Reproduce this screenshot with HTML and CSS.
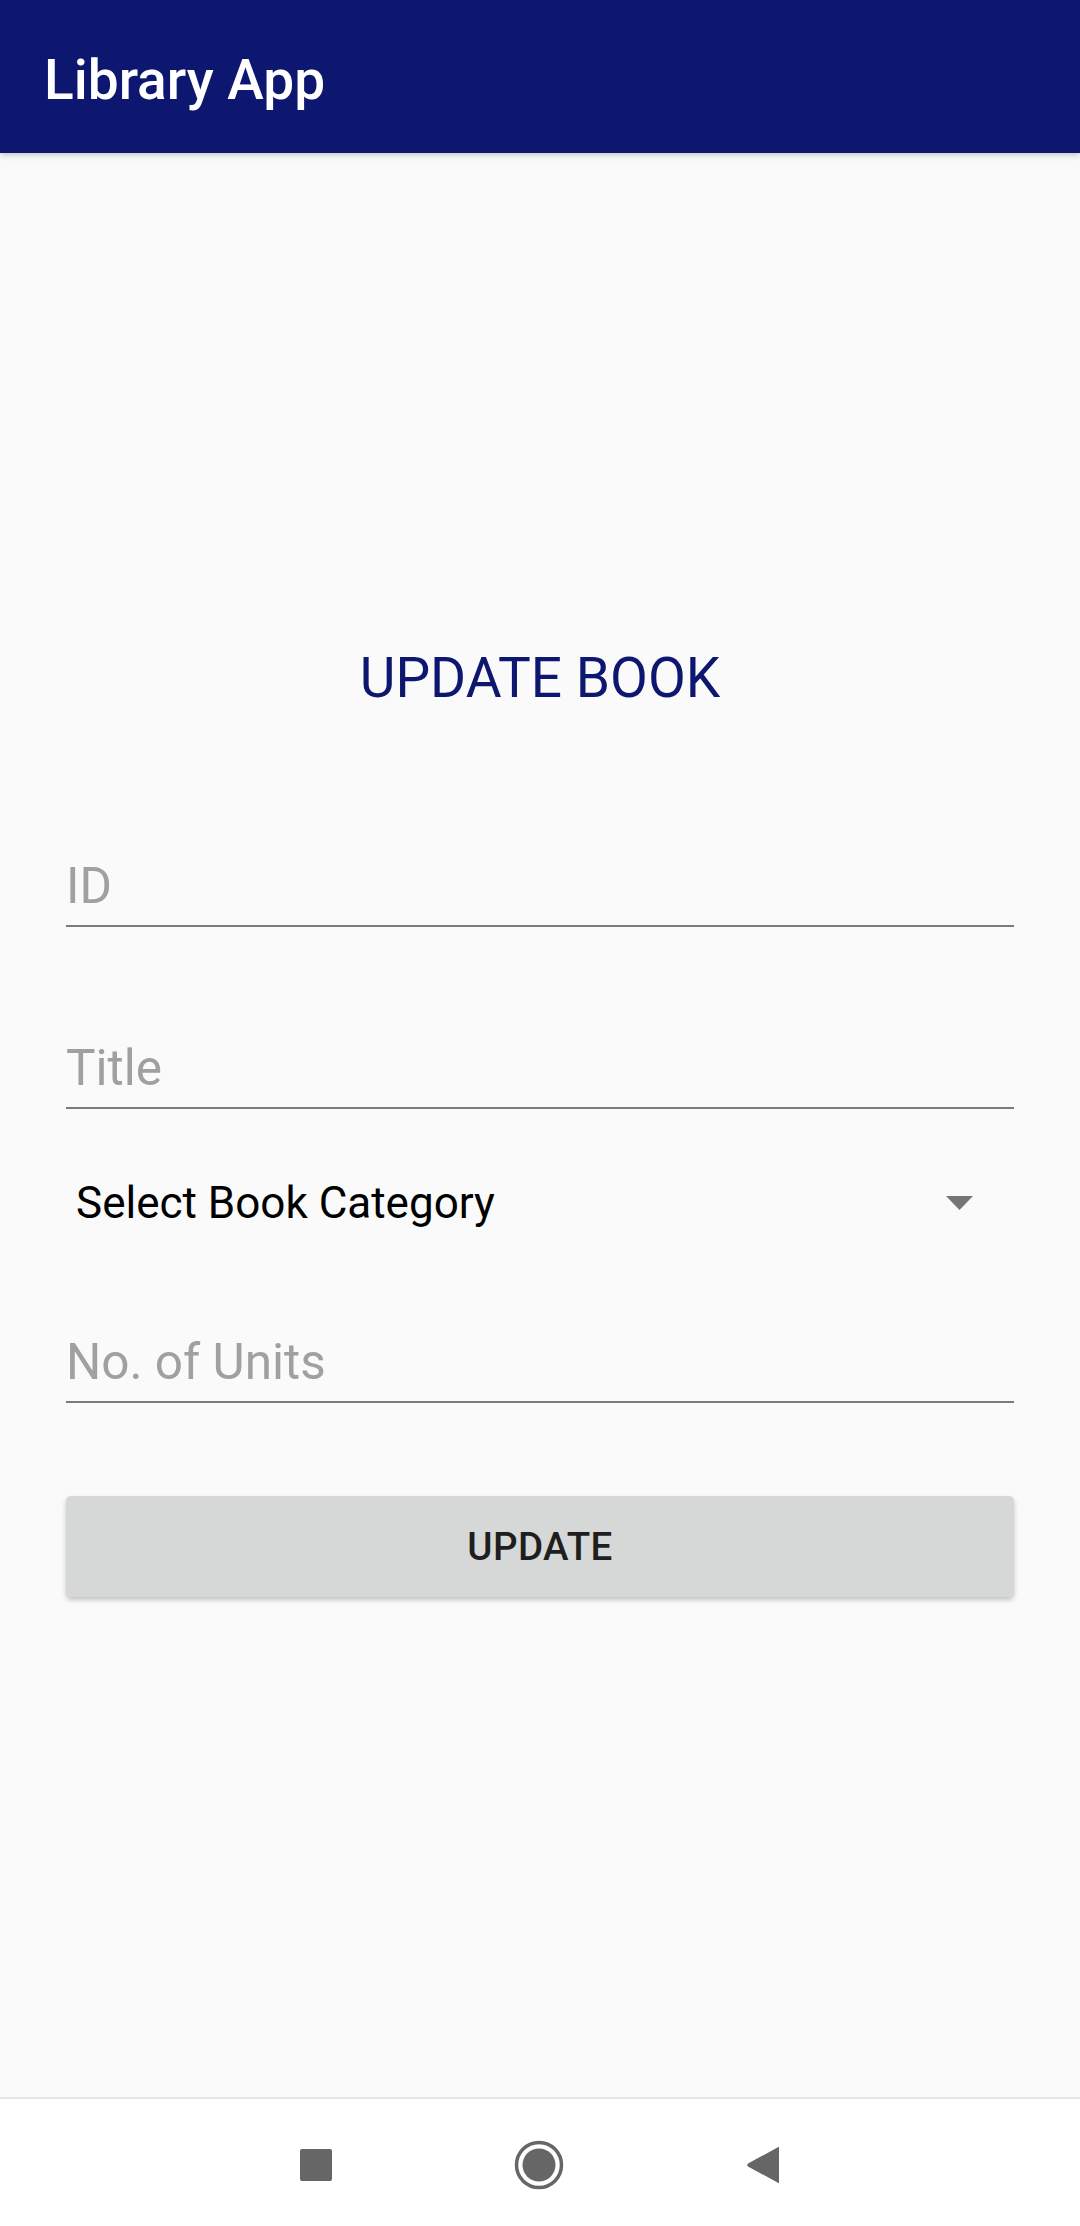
FILE: index.html
```html
<!DOCTYPE html>
<html>
<head>
<meta charset="utf-8">
<link rel="stylesheet" href="styles.css">
</head>
<body>
<div class="screen">
  <header class="appbar"><span class="appbar-title">Library App</span></header>
  <main class="content">
    <h1 class="page-title">UPDATE BOOK</h1>
    <div class="field field-id"><span class="hint">ID</span></div>
    <div class="field field-title"><span class="hint">Title</span></div>
    <div class="spinner">
      <span class="spinner-text">Select Book Category</span>
      <svg class="spinner-arrow" width="27" height="14" viewBox="0 0 27 14"><polygon points="0,0 27,0 13.5,14" fill="#757575"/></svg>
    </div>
    <div class="field field-units"><span class="hint">No. of Units</span></div>
    <button class="btn">UPDATE</button>
  </main>
  <nav class="navbar">
    <svg class="nav-icon" width="32" height="32" viewBox="0 0 32 32"><rect x="0" y="0" width="32" height="32" rx="2" fill="#666666"/></svg>
    <svg class="nav-icon" width="50" height="50" viewBox="0 0 50 50"><circle cx="25" cy="25" r="22.5" fill="none" stroke="#666666" stroke-width="3.5"/><circle cx="25" cy="25" r="16.5" fill="#666666"/></svg>
    <svg class="nav-icon" width="34" height="38" viewBox="0 0 34 38"><path d="M33 2 L33 36 Q33 38 31.5 36.5 L2 20.5 Q0.5 19 2 17.5 L31.5 1.5 Q33 0 33 2 Z" fill="#666666"/></svg>
  </nav>
</div>
</body>
</html>
```

FILE: styles.css
```css
html, body {
  margin: 0;
  padding: 0;
}

body {
  background: #fafafa;
  font-family: Roboto, "Noto Sans", "Liberation Sans", sans-serif;
}

.screen {
  width: 1080px;
  height: 2226px;
  display: flex;
  flex-direction: column;
  overflow: hidden;
}

.appbar {
  height: 153px;
  flex: 0 0 153px;
  box-sizing: border-box;
  background: #0e176f;
  display: flex;
  align-items: center;
  padding: 6px 0 0 44px;
  box-shadow: 0 2px 6px rgba(0, 0, 0, 0.22);
  position: relative;
  z-index: 1;
}

.appbar-title {
  color: #ffffff;
  font-size: 55px;
  font-weight: 500;
  line-height: 64px;
}

.content {
  flex: 1 1 auto;
  display: flex;
  flex-direction: column;
  padding: 0 66px;
}

.page-title {
  margin: 493px 0 0 0;
  font-size: 55px;
  font-weight: 400;
  line-height: 64px;
  color: #0e176f;
  text-align: center;
}

.field {
  height: 58px;
  padding-bottom: 10px;
  border-bottom: 2px solid #7b7b7b;
  box-sizing: content-box;
}

.hint {
  display: block;
  font-size: 49.5px;
  line-height: 58px;
  color: #a0a0a0;
}

.field-id {
  margin-top: 147px;
}

.field-title {
  margin-top: 112px;
}

.spinner {
  margin-top: 68px;
  height: 52px;
  display: flex;
  align-items: center;
  justify-content: space-between;
  padding: 0 41px 0 10px;
}

.spinner-text {
  font-size: 44px;
  line-height: 52px;
  color: #000000;
}

.spinner-arrow {
  display: block;
}

.field-units {
  margin-top: 104px;
}

.btn {
  margin-top: 93px;
  height: 101px;
  border: none;
  border-radius: 5px;
  background: #d6d7d7;
  box-shadow: 0 3px 5px rgba(0, 0, 0, 0.22);
  font-family: Roboto, "Noto Sans", "Liberation Sans", sans-serif;
  font-size: 38.5px;
  font-weight: 500;
  letter-spacing: 0.4px;
  color: #1e1e1e;
  padding: 0;
}

.navbar {
  flex: 0 0 129px;
  height: 129px;
  box-sizing: border-box;
  background: #ffffff;
  border-top: 2px solid #e6e6e6;
  display: flex;
  align-items: center;
  justify-content: center;
  padding-top: 4px;
  gap: 182px;
}

.nav-icon {
  display: block;
}
```
